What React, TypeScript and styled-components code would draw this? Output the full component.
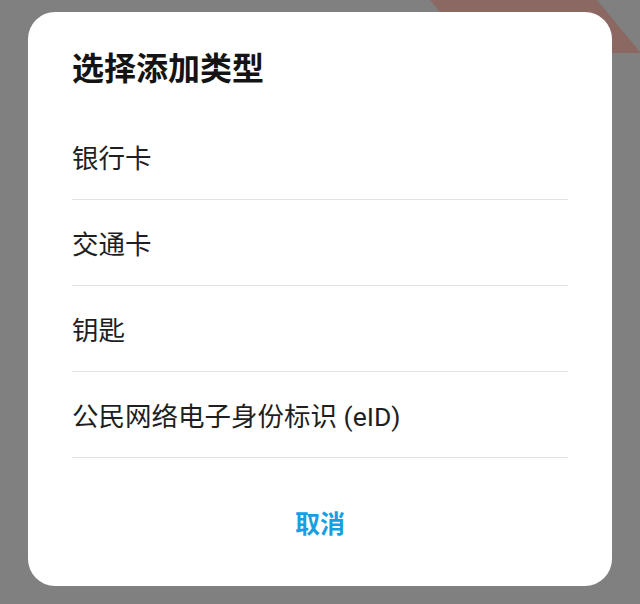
import styled, { createGlobalStyle } from "styled-components";

const GlobalStyle = createGlobalStyle`
  html, body {
    margin: 0;
    padding: 0;
    background: #808080;
  }
  body {
    font-family: Roboto, "Noto Sans CJK SC", sans-serif;
  }
`;

const Screen = styled.div`
  position: relative;
  min-height: 604px;
  box-sizing: border-box;
  padding: 12px 28px 0;
  overflow: hidden;
`;

const Backdrop = styled.svg`
  position: absolute;
  top: 0;
  right: 0;
`;

const Dialog = styled.div`
  position: relative;
  background: #ffffff;
  border-radius: 27px;
  padding: 0 44px;
  display: flex;
  flex-direction: column;
`;

const Title = styled.h2`
  margin: 0;
  padding: 34px 0 28px;
  font-size: 32px;
  line-height: 40px;
  font-weight: 700;
  color: #141414;
  font-family: "Noto Sans CJK SC", sans-serif;
`;

const List = styled.div`
  display: flex;
  flex-direction: column;
`;

const Row = styled.div`
  height: 85px;
  display: flex;
  align-items: center;
  border-bottom: 1px solid #e2e2e2;
  font-size: 26.5px;
  color: #1f1f1f;
`;

const Cancel = styled.button`
  height: 128px;
  border: none;
  background: none;
  padding: 0;
  font-family: "Noto Sans CJK SC", sans-serif;
  font-size: 25px;
  font-weight: 700;
  color: #1b9de2;
`;

const items = ["银行卡", "交通卡", "钥匙", "公民网络电子身份标识 (eID)"];

export default function App() {
  return (
    <>
      <GlobalStyle />
      <Screen>
        <Backdrop width="210" height="60" viewBox="430 0 210 60">
          <polygon points="430,0 597,0 640,52 640,53 474,53" fill="#8b6862" />
        </Backdrop>
        <Dialog>
          <Title>选择添加类型</Title>
          <List>
            {items.map((label) => (
              <Row key={label}>{label}</Row>
            ))}
          </List>
          <Cancel>取消</Cancel>
        </Dialog>
      </Screen>
    </>
  );
}
